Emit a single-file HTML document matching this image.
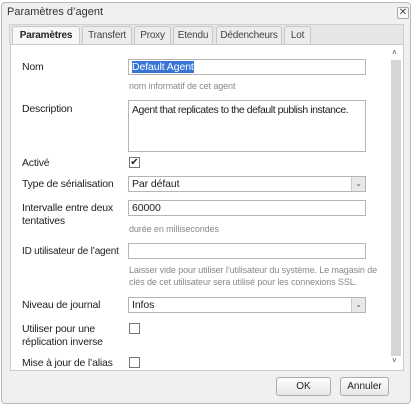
<!DOCTYPE html>
<html><head><meta charset="utf-8"><style>
*{box-sizing:border-box;margin:0;padding:0}
body{width:412px;height:405px;background:#fff;font-family:"Liberation Sans",Tahoma,sans-serif;font-size:10.5px;color:#222;position:relative;overflow:hidden}
.dlg{position:absolute;left:1px;top:2px;width:410px;height:402px;border:1px solid #b8b8b8;border-radius:4px;background:#f0f0f0}
.abs{position:absolute;white-space:nowrap}
.title{left:7px;top:6px;font-size:11px;color:#333}
.close{left:397px;top:7px;width:12px;height:12px;border:1px solid #aaa;border-radius:2px;font-size:10px;line-height:10px;text-align:center;color:#444;background:#fafafa}
.strip{left:9px;top:24px;width:395px;height:21px;background:#e6e6e6;border:1px solid #d0d0d0;border-bottom:none}
.tab{top:26px;height:19px;border:1px solid #c8c8c8;border-bottom:none;border-radius:3px 3px 0 0;background:#ececec;text-align:center;line-height:18px;color:#444;font-size:10px;letter-spacing:-0.2px}
.tab.on{background:#f7f7f7;font-weight:bold;color:#222;height:20px}
.panel{left:10px;top:44px;width:394px;height:327px;background:#fff;border:1px solid #ccc}
.thumb{left:391px;top:60px;width:10px;height:296px;background:#d6d6d6}
.lbl{left:22px;color:#222;line-height:13px;letter-spacing:-0.2px}
.inp{left:128px;width:238px;height:16px;border:1px solid #b5b5b5;background:#fff;padding-left:3px;line-height:14px;letter-spacing:-0.1px}
.hint{left:129px;color:#888;font-size:9px;line-height:12px;letter-spacing:-0.1px}
.cb{left:129px;width:11px;height:11px;border:1px solid #777;background:#fff;font-size:10px;line-height:9px;text-align:center}
.arr{position:absolute;right:0;top:0;width:14px;height:14px;background:#e8e8e8;border-left:1px solid #ccc;font-size:8px;text-align:center;line-height:13px;color:#555}
.btn{top:377px;height:19px;border:1px solid #aaa;border-radius:3px;background:linear-gradient(#fdfdfd,#e8e8e8);text-align:center;line-height:17px;font-size:10px}
</style></head><body>
<div class="dlg"></div>
<div class="abs title">Paramètres d’agent</div>
<div class="abs close">✕</div>
<div class="abs strip"></div>
<div class="abs tab on" style="left:12px;width:68px">Paramètres</div>
<div class="abs tab" style="left:82px;width:50px">Transfert</div>
<div class="abs tab" style="left:134px;width:37px">Proxy</div>
<div class="abs tab" style="left:173px;width:40px">Etendu</div>
<div class="abs tab" style="left:216px;width:66px">Dédencheurs</div>
<div class="abs tab" style="left:284px;width:27px">Lot</div>
<div class="abs panel"></div>
<div class="abs thumb"></div>
<div class="abs" style="left:392px;top:48px;font-size:8px;color:#444">˄</div>
<div class="abs" style="left:392px;top:356px;font-size:8px;color:#444">˅</div>

<div class="abs lbl" style="top:61px">Nom</div>
<div class="abs inp" style="top:59px"><span style="background:#3875d7;color:#fff">Default Agent</span></div>
<div class="abs hint" style="top:80px">nom informatif de cet agent</div>

<div class="abs lbl" style="top:103px">Description</div>
<div class="abs inp" style="top:100px;height:52px;padding-top:2px;overflow:hidden;letter-spacing:-0.45px">Agent that replicates to the default publish instance.</div>

<div class="abs lbl" style="top:157px">Activé</div>
<div class="abs cb" style="top:157px">✔</div>

<div class="abs lbl" style="top:178px">Type de sérialisation</div>
<div class="abs inp" style="top:176px">Par défaut<div class="arr">⌄</div></div>

<div class="abs lbl" style="top:202px">Intervalle entre deux<br>tentatives</div>
<div class="abs inp" style="top:200px">60000</div>
<div class="abs hint" style="top:223px">durée en millisecondes</div>

<div class="abs lbl" style="top:245px;font-size:10px">ID utilisateur de l’agent</div>
<div class="abs inp" style="top:243px"></div>
<div class="abs hint" style="top:264px">Laisser vide pour utiliser l’utilisateur du système. Le magasin de<br>clés de cet utilisateur sera utilisé pour les connexions SSL.</div>

<div class="abs lbl" style="top:299px">Niveau de journal</div>
<div class="abs inp" style="top:297px">Infos<div class="arr">⌄</div></div>

<div class="abs lbl" style="top:323px">Utiliser pour une<br>réplication inverse</div>
<div class="abs cb" style="top:323px"></div>

<div class="abs lbl" style="top:357px">Mise à jour de l’alias</div>
<div class="abs cb" style="top:357px"></div>

<div class="abs btn" style="left:276px;width:55px">OK</div>
<div class="abs btn" style="left:340px;width:49px">Annuler</div>
</body></html>
